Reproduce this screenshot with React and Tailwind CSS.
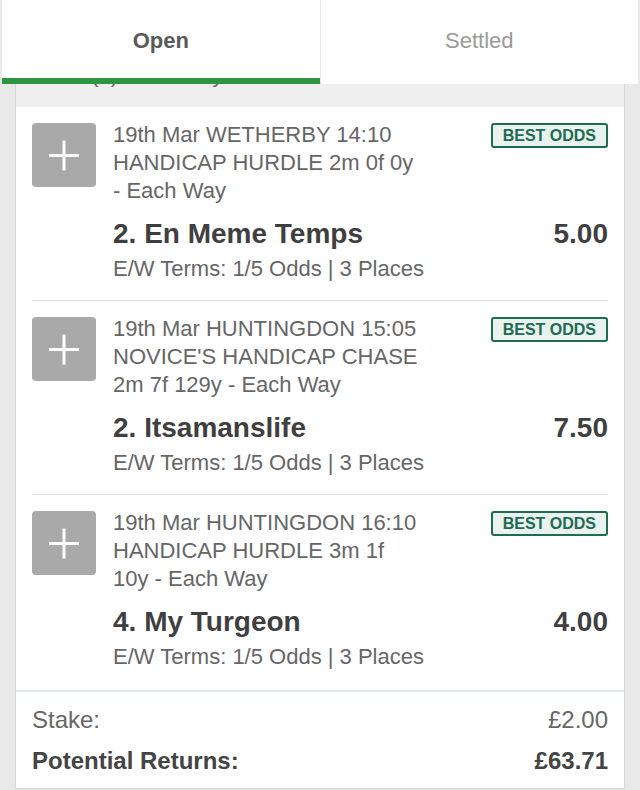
import React from 'react';

const bets = [
  {
    lines: ['19th Mar WETHERBY 14:10', 'HANDICAP HURDLE 2m 0f 0y', '- Each Way'],
    name: '2. En Meme Temps',
    odds: '5.00',
  },
  {
    lines: ['19th Mar HUNTINGDON 15:05', "NOVICE'S HANDICAP CHASE", '2m 7f 129y - Each Way'],
    name: '2. Itsamanslife',
    odds: '7.50',
  },
  {
    lines: ['19th Mar HUNTINGDON 16:10', 'HANDICAP HURDLE 3m 1f', '10y - Each Way'],
    name: '4. My Turgeon',
    odds: '4.00',
  },
];

function PlusBox() {
  return (
    <div className="w-16 h-16 shrink-0 mt-[2px] rounded-[4px] bg-[#a9a9a9] flex items-center justify-center">
      <svg width="64" height="64" viewBox="0 0 64 64">
        <path d="M17 32.5h30M32 17.5v30" stroke="#fff" strokeWidth="3" fill="none" />
      </svg>
    </div>
  );
}

function BetRow({ bet, last }) {
  return (
    <div className={last ? 'pb-[19px]' : 'pb-[17px] border-b border-[#e2e2e2]'}>
      <div className="flex gap-[17px] pt-[14px]">
        <PlusBox />
        <div className="flex-1 min-w-0">
          <div className="flex justify-between items-start">
            <div className="text-[22px] leading-[28px] text-[#666]">
              {bet.lines.map((l) => (
                <div key={l} className="whitespace-nowrap">{l}</div>
              ))}
            </div>
            <div className="mt-[2px] h-[25px] px-[10px] flex items-center border-2 border-[#1d6b52] rounded-[3px] bg-[#e9f2ee] text-[#1d6b52] text-[16px] font-bold leading-none">
              BEST ODDS
            </div>
          </div>
          <div className="mt-[12px] flex justify-between items-baseline text-[28px] leading-[34px] font-bold text-[#3f3f3f]">
            <span>{bet.name}</span>
            <span>{bet.odds}</span>
          </div>
          <div className="mt-[4px] text-[22px] leading-[28px] text-[#666]">
            E/W Terms: 1/5 Odds | 3 Places
          </div>
        </div>
      </div>
    </div>
  );
}

export default function App() {
  return (
    <div
      className="min-h-[790px] h-[790px] overflow-hidden bg-[#e9e9e9]"
      style={{ fontFamily: '"Liberation Sans", Arial, sans-serif' }}
    >
      <div className="flex h-[84px] gap-[1px] px-[2px]">
        <div className="flex-1 bg-white border-b-[6px] border-[#2e9440] flex items-center justify-center">
          <span className="text-[22px] font-bold text-[#5a5a5a] mt-[2px]">Open</span>
        </div>
        <div className="flex-1 bg-white flex items-center justify-center pb-[6px]">
          <span className="text-[22px] text-[#9a9a9a] mt-[2px]">Settled</span>
        </div>
      </div>

      <div className="mx-4 bg-white shadow-[0_0_2px_rgba(0,0,0,0.25)]">
        <div className="h-[23px] bg-[#efefef] overflow-hidden px-4">
          <div className="-mt-[23px] text-[22px] leading-[28px] text-[#666]">Trixie (3) Each Way</div>
        </div>

        <div className="px-4">
          {bets.map((b, i) => (
            <BetRow key={b.name} bet={b} last={i === bets.length - 1} />
          ))}
        </div>

        <div className="border-t-2 border-[#e1e5e8] px-4 pt-[14px] pb-[13px]">
          <div className="flex justify-between text-[24px] leading-[28px] text-[#666]">
            <span>Stake:</span>
            <span>£2.00</span>
          </div>
          <div className="mt-[13px] flex justify-between text-[24px] leading-[28px] font-bold text-[#444]">
            <span>Potential Returns:</span>
            <span>£63.71</span>
          </div>
        </div>
      </div>
    </div>
  );
}
